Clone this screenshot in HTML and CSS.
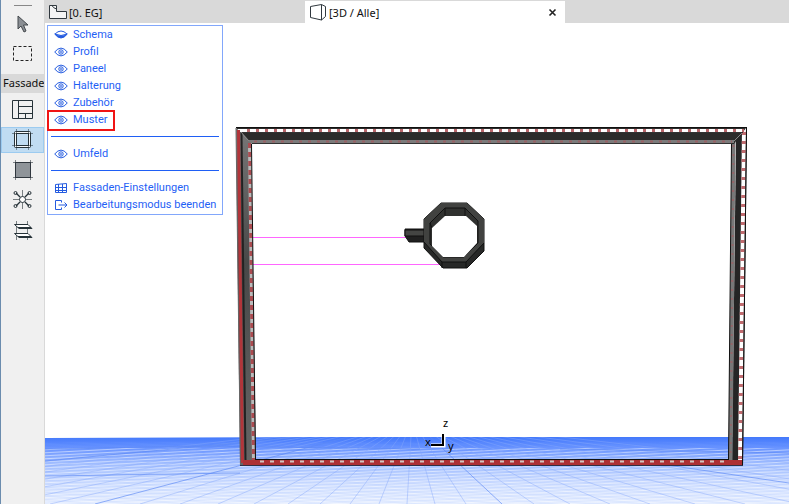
FILE: index.html
```html
<!DOCTYPE html>
<html lang="de">
<head>
    <meta charset="UTF-8">
    <meta name="viewport" content="width=device-width, initial-scale=1.0">
    <title>Fassade</title>
    <link rel="stylesheet" href="styles.css">
</head>
<body>
    <svg class="defs" aria-hidden="true">
        <symbol id="eye" viewBox="0 0 14 10">
            <path d="M.7 5Q7-2.8 13.3 5Q7 12.8.7 5Z"/>
            <circle cx="7" cy="5" r="2.2"/>
            <circle cx="7" cy="5" r=".5"/>
        </symbol>
    </svg>

    <nav class="toolbar">
        <div class="handle"></div>
        <button class="tool" aria-label="Pfeil">
            <svg width="22" height="22"><path d="M6 4V17L9 14L12 20L14 19L11.500 13H16Z" fill="#8b8f94" stroke="#43484c"/></svg>
        </button>
        <button class="tool" aria-label="Markierung">
            <svg width="22" height="22"><rect x="1.500" y="4.500" width="18" height="14" fill="none" stroke="#222" stroke-dasharray="3 2"/></svg>
        </button>
        <div class="tool-label">Fassade</div>
        <button class="tool" aria-label="Schema">
            <svg width="22" height="22" fill="none" stroke="#263238"><path d="M.5 1.500H20.500V19.500H.5ZM6.500 1.500V19.500M6.500 7.500H20.500M6.500 14.500H20.500M13.500 14.500V19.500"/></svg>
        </button>
        <button class="tool active" aria-label="Profil">
            <svg width="22" height="22" fill="none" stroke="#263238"><rect x="2.500" y="2.500" width="16" height="16" rx="1" fill="#f8fbfd"/><rect x="4.500" y="4.500" width="12" height="12" fill="#c0dcf2"/><path d="M4.500 0V4.500M16.500 0V4.500M4.500 16.500V21M16.500 16.500V21M0 4.500H4.500M16.500 4.500H21M0 16.500H4.500M16.500 16.500H21" stroke-width=".5"/></svg>
        </button>
        <button class="tool" aria-label="Paneel">
            <svg width="22" height="22"><rect x="3.500" y="3.500" width="15" height="15" fill="#8f9499" stroke="#30383e"/><path d="M3.500 1V21M18.500 1V21M1 3.500H21M1 18.500H21" stroke="#30383e" stroke-width=".6"/></svg>
        </button>
        <button class="tool" aria-label="Halterung">
            <svg width="22" height="22" fill="none" stroke="#263238"><path d="M1 10.500H8M13 10.500H20M10.500 1V8M10.500 13V20" stroke-width=".6"/><path d="M4 4L8 8M17 4L13 8M4 17L8 13M17 17L13 13" stroke-width="1.300"/><circle cx="10.500" cy="10.500" r="3" fill="#fff"/><circle cx="3.500" cy="4" r="1.500"/><circle cx="17.500" cy="4" r="1.500"/><circle cx="3.500" cy="17" r="1.500"/><circle cx="17.500" cy="17" r="1.500"/></svg>
        </button>
        <button class="tool" aria-label="Zubehör">
            <svg width="22" height="22" fill="none" stroke="#263238"><path d="M4.500 2V21M15.500 2V21" stroke-width=".6"/><path d="M2.500 5.500H16L20 9.500H7ZM2.500 14.500H16L20 18.500H7Z" fill="#fff"/><path d="M6 8.500H19M6 17.500H19"/></svg>
        </button>
    </nav>

    <main class="main">
        <div class="tabs">
            <button class="tab">
                <svg width="20" height="18" fill="#f4f4f4" stroke="#30383e"><path d="M1.500 2.500H8.500V8.500H18.500V15.500H1.500Z"/><path d="M4 2.500Q5 5 8.500 6" fill="none"/></svg>
                <span>[0. EG]</span>
            </button>
            <div class="tab current">
                <svg width="20" height="18" fill="none" stroke="#30383e"><path d="M2.500 3.500L13.500 1.500V17L2.500 14.500ZM13.500 1.500L17.500 3.500V13.500L13.500 17"/></svg>
                <span>[3D / Alle]</span>
                <button class="close" aria-label="Schließen"><svg width="9" height="9"><path d="M1.500 1.500L7.500 7.500M7.500 1.500L1.500 7.500" stroke="#222" stroke-width="1.600"/></svg></button>
            </div>
        </div>

        <div class="view">
            <svg class="scene" viewBox="45 23 744 481" preserveAspectRatio="xMinYMin slice">
                <defs>
                    <linearGradient id="floor" x1="0" y1="0" x2="0" y2="1">
                        <stop offset="0" stop-color="#4379fb"/>
                        <stop offset=".15" stop-color="#6490ff"/>
                        <stop offset=".4" stop-color="#a3bfff"/>
                        <stop offset=".7" stop-color="#cfdeff"/>
                        <stop offset="1" stop-color="#e6eeff"/>
                    </linearGradient>
                    <linearGradient id="side" x1="0" y1="0" x2="0" y2="1">
                        <stop offset="0" stop-color="#777"/>
                        <stop offset=".4" stop-color="#484848"/>
                        <stop offset="1" stop-color="#666"/>
                    </linearGradient>
                    <pattern id="rows" width="120" height="3" patternUnits="userSpaceOnUse" patternTransform="rotate(-3)">
                        <path d="M0 1.500H120" stroke="#fff" stroke-opacity=".5"/>
                    </pattern>
                    <pattern id="rows2" width="120" height="4" patternUnits="userSpaceOnUse" patternTransform="rotate(5)">
                        <path d="M0 2H120" stroke="#7ea3ff" stroke-opacity=".2"/>
                    </pattern>
                    <clipPath id="ground"><path d="M45 438L300 437H789V504H45Z"/></clipPath>
                </defs>

                <!-- ground grid -->
                <g clip-path="url(#ground)">
                    <rect x="45" y="437" width="744" height="67" fill="url(#floor)"/>
                    <rect x="45" y="448" width="744" height="56" fill="url(#rows)"/>
                    <rect x="45" y="442" width="744" height="62" fill="url(#rows2)"/>
                    <path d="M412 420L-330 504M412 420L-250 504M412 420L-180 504M412 420L-110 504M412 420L-50 504M412 420L0 504M412 420L50 504M412 420L140 504M412 420L180 504M412 420L218 504M412 420L254 504M412 420L288 504M412 420L320 504M412 420L350 504M412 420L379 504M412 420L407 504M412 420L435 504M412 420L466 504M412 420L534 504M412 420L570 504M412 420L610 504M412 420L650 504M412 420L695 504M412 420L745 504M412 420L800 504M412 420L870 504M412 420L950 504M412 420L1040 504M412 420L1150 504" stroke="#87a8fb" stroke-opacity=".45" fill="none"/>
                    <path d="M412 420L95 504M412 420L502 504M45 461L300 437M45 449L200 446L420 449M560 449L789 453M45 476L240 473M640 461L789 483" stroke="#5c88f5" stroke-opacity=".65" fill="none"/>
                </g>

                <!-- magenta guides -->
                <path d="M252 237.500H406" stroke="#f6f"/>
                <path d="M252 264.500H443" stroke="#f6f"/>

                <!-- right and top profile -->
                <path d="M736 138L747 128L743 466L732 460Z" fill="#252525"/>
                <path d="M744 129L740 463" stroke="#fff" stroke-width="4"/>
                <path d="M744 132L740 460" stroke="#c06b6f" stroke-width="4" stroke-dasharray="3 6"/>
                <path d="M746.500 128L742.500 466" stroke="#111"/>
                <path d="M733.500 142L730.500 460" stroke="#777" stroke-width="4"/>
                <path d="M733.500 145L730.500 460" stroke="#946568" stroke-width="2" stroke-dasharray="2 7"/>
                <path d="M731.500 144L728.500 460" stroke="#111"/>
                <path d="M236 128H746L734 144H252Z" fill="#2c2c2b"/>
                <path d="M236 127.500H747" stroke="#111"/>
                <path d="M238 130.500H744" stroke="#fff" stroke-width="3"/>
                <path d="M247 130.500H744" stroke="#b8666a" stroke-width="3" stroke-dasharray="3 6"/>
                <path d="M238 132.500H743" stroke="#333"/>
                <path d="M249 141.500H734" stroke="#7b7b7b" stroke-width="3"/>
                <path d="M254 141.500H732" stroke="#996164" stroke-width="2" stroke-dasharray="3 6"/>
                <path d="M252 143.500H732" stroke="#333"/>
                <path d="M742 133L734 141" stroke="#888"/>

                <!-- left and bottom profile -->
                <path d="M236 128L251 143L256 460L240 466Z" fill="url(#side)"/>
                <path d="M236 128L240.500 466" stroke="#666"/>
                <path d="M238.500 130L242.500 463" stroke="#b2353a" stroke-width="3"/>
                <path d="M241.500 133L245.500 460" stroke="#222" stroke-width="2"/>
                <path d="M249.500 143L253.500 460" stroke="#bbb" stroke-width="3"/>
                <path d="M249.500 143L253.500 460" stroke="#ab4b50" stroke-width="3" stroke-dasharray="5 4"/>
                <path d="M251.500 144L255.500 460" stroke="#111"/>
                <path d="M241 132L249 141" stroke="#888"/>
                <path d="M255 459.500H729" stroke="#111"/>
                <path d="M243 462.500H742" stroke="#ad3034" stroke-width="5"/>
                <path d="M260 461.500H730" stroke="#d0c5c0" stroke-width="2" stroke-dasharray="4 6"/>
                <path d="M240 465.500H743" stroke="#303044"/>

                <!-- ring with handle -->
                <path d="M405 229H425V242H409L405 236Z" fill="#202020" stroke="#111"/>
                <path d="M405 230H425V236H405Z" fill="#444543" stroke="#111"/>
                <path d="M441 203H467L484 219V251L467 268H443L424 248V219Z" fill="#272827" stroke="#111"/>
                <path d="M441 203H467L484 219V243L466 262H442L424 242V219Z" fill="#414240"/>
                <path d="M424 242L442 262H466L484 243M442 262V268M466 262V268" fill="none" stroke="#111"/>
                <path d="M445 208H465L478 221V243L464 257H443L430 244V223Z" fill="#30312f" stroke="#111"/>
                <path d="M445 208V216M465 208V216M430 223L432 228" stroke="#111"/>
                <path d="M445 216H466L477 226V243L464 257H443L432 246V228Z" fill="#fff"/>

                <!-- axes -->
                <path d="M443.500 434V445.500H431" fill="none" stroke="#fff" stroke-width="4"/>
                <path d="M443 434V445H431" fill="none" stroke="#000" stroke-width="2"/>
                <g class="axis">
                    <text x="443" y="427">z</text>
                    <text x="425" y="446">x</text>
                    <text x="448" y="450">y</text>
                </g>
            </svg>

            <div class="menu">
                <button class="menu-item"><svg width="14" height="10"><path d="M.7 4Q7 12 13.300 4Q7 7 .7 4Z" fill="#245be0"/><path d="M1 4Q7-2 13 4"/></svg>Schema</button>
                <button class="menu-item"><svg width="14" height="10"><use href="#eye"/></svg>Profil</button>
                <button class="menu-item"><svg width="14" height="10"><use href="#eye"/></svg>Paneel</button>
                <button class="menu-item"><svg width="14" height="10"><use href="#eye"/></svg>Halterung</button>
                <button class="menu-item"><svg width="14" height="10"><use href="#eye"/></svg>Zubehör</button>
                <button class="menu-item marked"><svg width="14" height="10"><use href="#eye"/></svg>Muster</button>
                <hr class="line">
                <button class="menu-item"><svg width="14" height="10"><use href="#eye"/></svg>Umfeld</button>
                <hr class="line">
                <button class="menu-item"><svg width="14" height="12"><path d="M1.500 2.500L12.500 1.500V10.500H1.500ZM4.500 2V10.500M8.500 2V10.500M1.500 5.500H12.500M1.500 8.500H12.500"/></svg>Fassaden-Einstellungen</button>
                <button class="menu-item"><svg width="14" height="12"><path d="M7.500 3.500V1.500H1.500V10.500H7.500V8.500M4.500 6H13M10.500 3.500L13 6L10.500 8.500"/></svg>Bearbeitungsmodus beenden</button>
            </div>
        </div>
    </main>
</body>
</html>
```

FILE: styles.css
```css
*,
*::after {
    box-sizing: border-box;
}
body {
    display: flex;
    min-height: 100vh;
    margin: 0;
    font-family: "Noto Sans", "Open Sans", sans-serif;
    font-size: 11px;
    background-color: #fff;
    color: #111;
}
button {
    padding: 0;
    border: none;
    background: none;
    font: inherit;
    color: inherit;
    cursor: pointer;
}
svg {
    flex: none;
}
.defs {
    position: absolute;
    width: 0;
    height: 0;
}

/* Toolbar */
.toolbar {
    display: flex;
    flex-direction: column;
    gap: 4px;
    width: 45px;
    flex: none;
    padding-top: 5px;
    border-left: 1px solid #6b8cae;
    border-right: 1px solid #d9d9d9;
    background-color: #f0f0f0;
}
.handle {
    width: 18px;
    height: 1px;
    margin: 0 auto;
    background-color: #888;
}
.tool {
    display: flex;
    align-items: center;
    justify-content: center;
    height: 26px;
}
.tool.active {
    background-color: #c0dcf2;
    border: 1px solid #9ccbf0;
}
.tool-label {
    height: 19px;
    margin-top: 4px;
    padding-left: 2px;
    line-height: 18px;
    overflow: hidden;
    background-color: #d9d9d9;
}

/* Tabs */
.main {
    display: flex;
    flex-direction: column;
    flex: 1;
    min-width: 0;
}
.tabs {
    display: flex;
    height: 23px;
    padding-top: 1px;
    background-color: #d9d9d9;
}
.tab {
    display: flex;
    align-items: center;
    gap: 1px;
    flex: 0 1 260px;
    padding: 0 8px 0 3px;
}
.tab.current {
    background-color: #fff;
}
.close {
    display: flex;
    margin-left: auto;
}

/* 3D view */
.view {
    position: relative;
    flex: 1;
}
.scene {
    position: absolute;
    width: 100%;
    height: 100%;
}
.axis {
    font-size: 11px;
}

/* Floating menu over the view */
.menu {
    position: absolute;
    top: 2px;
    left: 2px;
    display: flex;
    flex-direction: column;
    padding: 0 3px 1px;
    border: 1px solid #82a7fb;
    background-color: #fff;
    color: #1f5ff5;
    font-family: Roboto, "Noto Sans", sans-serif;
}
.menu-item {
    position: relative;
    display: flex;
    align-items: center;
    gap: 5px;
    height: 17px;
    padding: 0 3px;
    line-height: 17px;
    white-space: nowrap;
}
.menu-item svg {
    fill: none;
    stroke: #245be0;
}
.menu-item:hover {
    background-color: #eef4ff;
}
.menu-item.marked::after {
    content: "";
    position: absolute;
    top: -1px;
    left: -4px;
    width: 68px;
    height: 21px;
    border: 2px solid #f01414;
}
.line {
    width: 100%;
    height: 1px;
    margin: 8px 0;
    border: none;
    background-color: #1f5ff5;
}
```
